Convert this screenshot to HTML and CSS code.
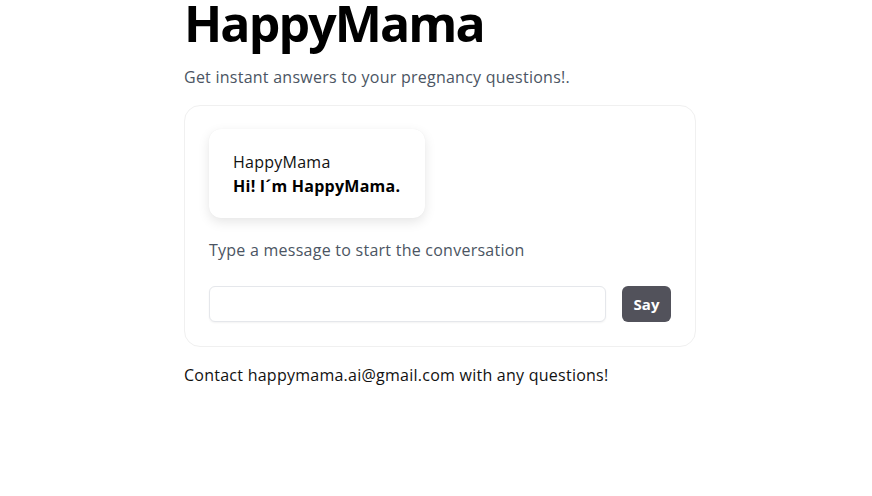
FILE: index.html
```html
<!DOCTYPE html>
<html>
<head>
<meta charset="utf-8">
<link rel="stylesheet" href="styles.css">
</head>
<body>
<main class="page">
  <h1 class="title">HappyMama</h1>
  <p class="subtitle">Get instant answers to your pregnancy questions!.</p>
  <section class="card">
    <div class="bubble">
      <div class="bubble-name">HappyMama</div>
      <div class="bubble-text">Hi! I´m HappyMama.</div>
    </div>
    <p class="hint">Type a message to start the conversation</p>
    <form class="composer">
      <input class="input" type="text">
      <button class="say" type="button">Say</button>
    </form>
  </section>
  <p class="contact">Contact happymama.ai@gmail.com with any questions!</p>
</main>
</body>
</html>
```
FILE: styles.css
```css
html, body { margin: 0; padding: 0; background: #fff; }
body { font-family: "Open Sans", "Noto Sans", sans-serif; color: #111; letter-spacing: 0.25px; }
.page { width: 512px; margin-left: 184px; display: flex; flex-direction: column; }
.title { margin: 0; font-size: 50px; line-height: 46px; font-weight: 700; color: #000; letter-spacing: -1.9px; }
.subtitle { margin: 19px 0 0 0; font-size: 16px; line-height: 24px; color: #4b5563; }
.card { margin-top: 16px; border: 1px solid #f0f0f0; border-radius: 16px; padding: 23px 24px 24px 24px; display: flex; flex-direction: column; }
.bubble { align-self: flex-start; width: 216px; box-sizing: border-box; padding: 21px 24px 20px 24px; border-radius: 12px; background: #fff; box-shadow: 0 4px 12px rgba(0,0,0,0.10), 0 0 1px rgba(0,0,0,0.06); }
.bubble-name { font-size: 16px; line-height: 24px; color: #111; }
.bubble-text { font-size: 16px; line-height: 24px; font-weight: 700; color: #000; }
.hint { margin: 20px 0 0 0; font-size: 16px; line-height: 24px; color: #4b5563; }
.composer { margin-top: 24px; display: flex; gap: 16px; }
.input { flex: 1; height: 36px; box-sizing: border-box; border: 1px solid #e5e7eb; border-radius: 6px; box-shadow: 0 1px 2px rgba(0,0,0,0.05); font: inherit; }
.say { width: 49px; height: 36px; border: none; border-radius: 6px; background: #52525b; color: #fff; font-family: inherit; font-size: 15px; font-weight: 700; padding: 0; letter-spacing: 0; }
.contact { margin: 16px 0 0 0; font-size: 16px; line-height: 24px; color: #111; }
```
